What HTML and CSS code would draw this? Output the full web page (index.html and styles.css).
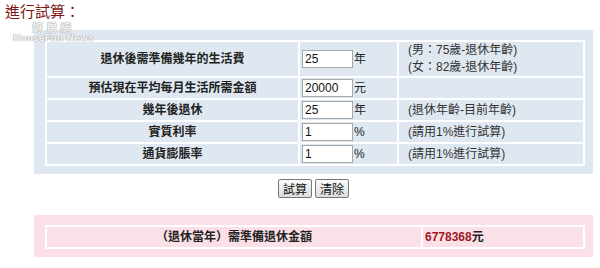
FILE: index.html
```html
<!DOCTYPE html>
<html lang="zh-Hant">
<head>
    <meta charset="UTF-8">
    <meta name="viewport" content="width=device-width, initial-scale=1.0">
    <title>進行試算</title>
    <link rel="stylesheet" href="styles.css">
</head>
<body>

    <h1 class="title">進行試算：</h1>
    <div class="watermark">
        <span class="wm-cn">好房網</span>
        <span class="wm-en">HouseFun News</span>
    </div>

    <form class="calc-form">
        <div class="panel panel-blue">
            <table class="grid">
                <tr class="tall">
                    <th class="label">退休後需準備幾年的生活費</th>
                    <td class="field"><span class="field-wrap"><input type="text" value="25">年</span></td>
                    <td class="note">(男：75歲-退休年齡)<br>(女：82歲-退休年齡)</td>
                </tr>
                <tr>
                    <th class="label">預估現在平均每月生活所需金額</th>
                    <td class="field"><span class="field-wrap"><input type="text" value="20000">元</span></td>
                    <td class="note"></td>
                </tr>
                <tr>
                    <th class="label">幾年後退休</th>
                    <td class="field"><span class="field-wrap"><input type="text" value="25">年</span></td>
                    <td class="note">(退休年齡-目前年齡)</td>
                </tr>
                <tr>
                    <th class="label">實質利率</th>
                    <td class="field"><span class="field-wrap"><input type="text" value="1">%</span></td>
                    <td class="note">(請用1%進行試算)</td>
                </tr>
                <tr>
                    <th class="label">通貨膨脹率</th>
                    <td class="field"><span class="field-wrap"><input type="text" value="1">%</span></td>
                    <td class="note">(請用1%進行試算)</td>
                </tr>
            </table>
        </div>

        <div class="actions">
            <button type="button" class="btn">試算</button>
            <button type="reset" class="btn">清除</button>
        </div>

        <div class="panel panel-pink">
            <table class="grid result">
                <tr>
                    <th class="result-label">（退休當年）需準備退休金額</th>
                    <td class="result-value"><span class="amount">6778368</span>元</td>
                </tr>
            </table>
        </div>
    </form>

</body>
</html>
```

FILE: styles.css
```css
body {
    margin: 0;
    position: relative;
    background-color: #fff;
    color: #222;
    font-family: "Liberation Sans", "Noto Sans CJK TC", sans-serif;
    font-size: 12px;
}

.title {
    margin: 0;
    padding: 4px 0 1px 5px;
    font-size: 15px;
    line-height: 15px;
    font-weight: normal;
    color: #7d1616;
}

/* 浮水印 */
.watermark {
    position: absolute;
    left: 13px;
    top: 23px;
    display: flex;
    flex-direction: column;
    align-items: center;
    gap: 1px;
    color: rgba(255, 255, 255, 0.9);
    text-shadow: 0 0 1px #999, 0 0 1px #999;
    font-weight: bold;
}

.wm-cn {
    font-size: 11px;
    line-height: 10px;
    letter-spacing: 3px;
}

.wm-en {
    font-family: "DejaVu Sans", sans-serif;
    font-size: 9px;
    line-height: 8px;
}

.calc-form {
    margin: 10px 0 0 34px;
    width: 559px;
}

.panel {
    padding: 10px 8px 8px 11px;
}

.panel-blue {
    background-color: #dfe8f0;
}

.panel-pink {
    background-color: #fbe0e7;
}

.grid {
    width: 100%;
    border-collapse: separate;
    border-spacing: 0;
    border: 1px solid #fff;
}

.grid th,
.grid td {
    border: 1px solid #fff;
    padding: 0;
    height: 20px;
    line-height: 17px;
}

.grid .tall th,
.grid .tall td {
    height: 34px;
}

.label {
    width: 251px;
    text-align: center;
    font-weight: bold;
    color: #222;
}

.field {
    width: 97px;
}

.field-wrap {
    display: flex;
    align-items: center;
    gap: 1px;
    padding-left: 2px;
}

.field-wrap input {
    box-sizing: border-box;
    width: 51px;
    height: 18px;
    margin: 0;
    padding: 0 2px;
    border: 1px solid #a3a8ad;
    background: #fff;
    font-family: "Liberation Sans", sans-serif;
    font-size: 12px;
    color: #111;
}

.note {
    padding-left: 9px !important;
    color: #333;
}

.actions {
    display: flex;
    justify-content: center;
    gap: 3px;
    padding: 5px 0 17px;
}

.btn {
    height: 19px;
    padding: 0 4px;
    border: 1px solid #777;
    border-radius: 2px;
    background: linear-gradient(#fbfbfb, #dcdcdc);
    font-family: "Noto Sans CJK TC", sans-serif;
    font-size: 12px;
    line-height: 15px;
    color: #111;
}

.result-label {
    width: 374px;
    text-align: center;
    font-weight: bold;
}

.result-value {
    padding-left: 2px !important;
    font-weight: bold;
}

.amount {
    color: #a01828;
}
```
